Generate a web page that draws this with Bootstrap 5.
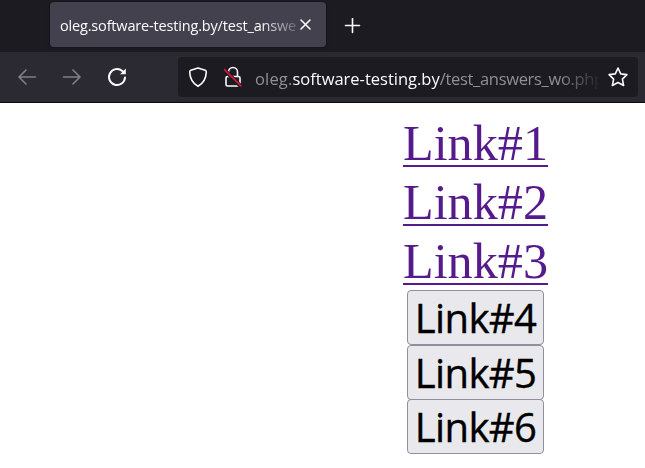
<!DOCTYPE html>
<html lang="en">
<head>
<meta charset="utf-8">
<meta name="viewport" content="width=device-width, initial-scale=1">
<title>oleg.software-testing.by/test_answers_wo.php</title>
<link href="https://cdn.jsdelivr.net/npm/bootstrap@5.3.0/dist/css/bootstrap.min.css" rel="stylesheet">
<style>
body{font-family:"Open Sans","Noto Sans",sans-serif;width:645px;height:468px}
svg{display:block;flex:none;fill:none;stroke:#fbfbfe;stroke-width:1.6;stroke-linecap:round;stroke-linejoin:round}
.tab-strip{height:52px;background:#1c1b22;padding:2px 0 0 50px}
.browser-tab{width:276px;height:45px;background:#42414d;border-radius:4px;padding-left:10px;box-shadow:0 0 3px rgba(0,0,0,.5)}
.tab-title{width:238px;font-size:14.5px;line-height:20px;letter-spacing:-.17px;color:#fbfbfe;margin-top:2px;-webkit-mask-image:linear-gradient(90deg,#000 200px,transparent 246px);mask-image:linear-gradient(90deg,#000 200px,transparent 246px)}
.tool-row{height:51px;background:#2b2a33;border-bottom:1px solid #0c0c0d;padding:5px 7px 5px 17px}
.dim-icon{stroke:#807f86}
.url-box{width:460px;height:40px;background:#1c1b22;border-radius:4px;padding:0 9px 0 10px}
.url-text{width:349px;font-size:16.5px;line-height:24px;color:#8f8f94;margin-top:4px;-webkit-mask-image:linear-gradient(90deg,#000 308px,transparent 352px);mask-image:linear-gradient(90deg,#000 308px,transparent 352px)}
.url-host{color:#fbfbfe}
.url-sub{letter-spacing:.15px;margin-left:1px}
.url-path{letter-spacing:-.32px}
.page-area{width:145px;margin-left:403px;padding-top:11px}
.visited{font-family:"Liberation Serif",serif;font-size:50.2px;line-height:59px;height:59px;color:#551a8b;text-decoration:underline;text-decoration-thickness:2px;text-underline-offset:5px;text-decoration-skip-ink:none}
.visited:hover{color:#551a8b}
.button-stack{margin-top:-1px}
.form-button{width:137px;height:55px;background:#e9e9ed;border:1px solid #8f8f9d;border-radius:4px;color:#000;font-size:40px;line-height:53px;letter-spacing:-.6px;padding:0;-webkit-text-stroke:.4px #000}
.form-button + .form-button{margin-top:-.4px}
</style>
<script src="https://cdn.jsdelivr.net/npm/bootstrap@5.3.0/dist/js/bootstrap.bundle.min.js"></script>
</head>
<body class="bg-white overflow-hidden">
<header>
  <div class="tab-strip d-flex">
    <div class="browser-tab d-flex align-items-center">
      <div class="tab-title text-nowrap">oleg.software-testing.by/test_answe</div>
      <svg width="16" height="16" viewBox="0 0 16 16" stroke-width="1.3"><path d="M3 3l9 9M12 3l-9 9"/></svg>
    </div>
    <svg class="mt-3 ms-3" width="20" height="20" viewBox="0 0 20 20"><path d="M3.500 7.500h14M10.500.5v14"/></svg>
  </div>
  <div class="tool-row d-flex align-items-center justify-content-between">
    <div class="d-flex gap-4">
      <svg class="dim-icon" width="20" height="20" viewBox="0 0 20 20"><path d="M18.500 10H2M9 3L2 10l7 7"/></svg>
      <svg class="dim-icon" width="20" height="20" viewBox="0 0 20 20"><path d="M2.500 10H19M12 3l7 7-7 7"/></svg>
      <svg width="22" height="20" viewBox="0 0 22 20"><path d="M20 10.500a8 8 0 1 1-2.700-6.500L18.700 5.400" stroke-width="2"/><path d="M20.800 1.500v5.800H15z" fill="#fbfbfe" stroke="none"/></svg>
    </div>
    <div class="url-box d-flex align-items-center">
      <svg width="20" height="22" viewBox="0 0 20 22" stroke-width="1.8"><path d="M10 2L17.200 4.300q1.100.4 1.100 1.600Q18 15.500 10 20.300Q2 15.500 1.700 5.900q0-1.200 1.100-1.600z"/></svg>
      <svg class="ms-3" width="18" height="22" viewBox="0 0 18 22"><rect x="2" y="10.500" width="14" height="9.500" rx="1.500"/><path d="M4.500 10.500V6a4.500 4.500 0 0 1 9 0v4.500"/><path d="M.5 4l16.700 16.700" stroke="#1c1b22" stroke-width="4"/><path d="M.5 3.500L17 20" stroke="#e6123d" stroke-width="1.600"/></svg>
      <div class="url-text text-nowrap ms-2 ps-1"><span class="url-sub">oleg.</span><span class="url-host">software-testing.by</span><span class="url-path">/test_answers_wo.php</span></div>
      <svg class="ms-auto" width="22" height="22" viewBox="0 0 22 22" stroke-width="1.8"><path d="M11 2l2.700 5.900 6.200.7-4.500 4.500 1.200 6.400L11 16.500l-5.600 3 1.200-6.400L2.100 8.600l6.200-.7z"/></svg>
    </div>
  </div>
</header>
<main class="page-area d-flex flex-column align-items-center">
  <a class="visited" href="#">Link#1</a>
  <a class="visited" href="#">Link#2</a>
  <a class="visited" href="#">Link#3</a>
  <div class="button-stack d-flex flex-column">
    <button class="form-button">Link#4</button>
    <button class="form-button">Link#5</button>
    <button class="form-button">Link#6</button>
  </div>
</main>
</body>
</html>
